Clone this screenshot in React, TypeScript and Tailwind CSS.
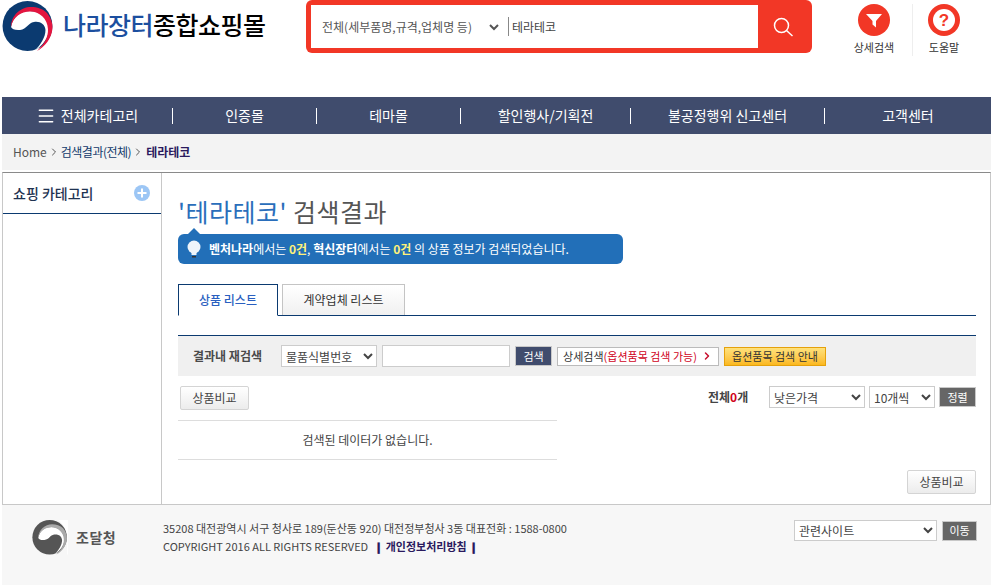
import { ChevronRight, Menu } from 'lucide-react';

const NAV = [
  { label: '인증몰', w: 'w-[144px]' },
  { label: '테마몰', w: 'w-[144px]' },
  { label: '할인행사/기획전', w: 'w-[170px]' },
  { label: '불공정행위 신고센터', w: 'w-[194px]' },
  { label: '고객센터', w: 'flex-1' },
];

function Emblem({ size, dark, accent }: { size: number; dark: string; accent: string }) {
  return (
    <svg width={size} height={size * 0.96} viewBox="2 1 52 50">
      <circle cx="27.5" cy="26" r="25" fill={dark} />
      <path
        d="M11 27C13 15 22 11 30 11C41 11 49 20 49 29C49 37 43 46 34 51L56 51L56 1L40 1C48 8 53 16 53 26L53 51L34 51C41 45 45.5 37 45.5 30C45 24 40 21 34 22C28 23 27 29 20 30C15 30.500 12 29 11 27Z"
        fill="#fff"
      />
      <path
        d="M11 27C11 15 21 7 31 7C37 7 43 9 47 13C51 18 52.800 23 52.500 28C52 38 45 47 37 51C44 45 48.500 37 48 29C47.500 19 40 11.500 30 11.500C21 11.500 13 17 11 27Z"
        fill={accent}
      />
      <path d="M53 26C53 16 48 8 40 3L56 3L56 51L37 51.500C46 49 53 38 53 26Z" fill="#fff" opacity="0" />
    </svg>
  );
}

function CompareButton() {
  return (
    <button className="h-[24px] w-[69px] border border-[#d4d4d4] rounded-[2px] bg-gradient-to-b from-white to-[#ececec] text-[12px] text-[#444]">
      상품비교
    </button>
  );
}

export default function App() {
  return (
    <div className="w-[992px] h-[585px] overflow-hidden bg-white pl-[2px] pr-[1px] text-[12px] text-[#444] font-['Noto_Sans_CJK_KR','Liberation_Sans',sans-serif]">
      {/* header */}
      <header className="h-[97px] flex items-start">
        <div className="w-[304px] flex items-center pt-[1px]">
          <Emblem size={52} dark="#0b3a70" accent="#e4153f" />
          <div className="ml-[9px] mt-[-4px] text-[25px] font-medium tracking-[-0.5px] leading-[36px] text-black whitespace-nowrap">
            <span className="text-[#1c4f9f]">나라장터</span>종합쇼핑몰
          </div>
        </div>
        <div className="w-[506px] h-[53px] flex bg-[#f23726] rounded-[6px] p-[5px] pr-0">
          <div className="flex-1 flex items-center bg-white pl-[7px]">
            <select className="w-[184px] h-[24px] text-[12px] text-[#555] bg-white outline-none">
              <option>전체(세부품명,규격,업체명 등)</option>
            </select>
            <span className="w-px h-[19px] bg-[#888] ml-[6px]" />
            <span className="ml-[3px] text-[12px] text-[#444]">테라테코</span>
          </div>
          <div className="w-[54px] flex items-center justify-center pr-[5px]">
            <svg width="22" height="22" viewBox="0 0 22 22" fill="none" stroke="#fff" strokeWidth="1.500">
              <circle cx="9.500" cy="9.500" r="7" />
              <path d="M14.500 14.500L20.500 20" />
            </svg>
          </div>
        </div>
        <div className="ml-[24px] w-[76px] flex flex-col items-center pt-[4px]">
          <div className="w-[32px] h-[32px] rounded-full bg-[#f23726] flex items-center justify-center">
            <svg width="18" height="18" viewBox="0 0 18 18" fill="#fff">
              <path d="M1 3H17L11 10V16.500L7.500 13.500V10Z" />
            </svg>
          </div>
          <span className="mt-[2px] text-[11px] leading-[18px] text-[#333]">상세검색</span>
        </div>
        <div className="w-px h-[52px] mt-[4px] bg-[#eee]" />
        <div className="w-[62px] flex flex-col items-center pt-[4px]">
          <div className="w-[32px] h-[32px] rounded-full bg-[#f23726] flex items-center justify-center">
            <span className="w-[22px] h-[22px] rounded-full bg-white flex items-center justify-center text-[17px] font-bold leading-none text-[#f23726] font-['Liberation_Sans',sans-serif]">
              ?
            </span>
          </div>
          <span className="mt-[2px] text-[11px] leading-[18px] text-[#333]">도움말</span>
        </div>
      </header>

      {/* nav */}
      <nav className="h-[37px] flex items-center bg-[#404c6d] text-[14px] text-white">
        <div className="w-[170px] flex items-center justify-center gap-[5px]">
          <Menu size={20} strokeWidth={1.75} />
          <span>전체카테고리</span>
        </div>
        {NAV.map((n) => (
          <div key={n.label} className={`${n.w} h-[16px] flex items-center justify-center border-l border-white`}>
            {n.label}
          </div>
        ))}
      </nav>

      {/* breadcrumb */}
      <div className="h-[36px] flex items-center bg-[#f3f3f3] pl-[11px] text-[12px] text-[#555]">
        <span>Home</span>
        <ChevronRight size={12} className="mx-[1px]" />
        <span className="text-[#123a6b] tracking-[-0.5px]">검색결과(전체)</span>
        <ChevronRight size={12} className="mx-[1px]" />
        <span className="ml-[1px] font-bold text-[#2a1a5e]">테라테코</span>
      </div>

      {/* main */}
      <main className="h-[333px] mt-[2px] flex border border-[#c8c8c8] border-t-[#8a8a8a]">
        <aside className="w-[159px] shrink-0 border-r border-[#c8c8c8]">
          <div className="h-[41px] flex items-center justify-between pl-[10px] pr-[11px] border-b border-[#0b3a70]">
            <span className="text-[14px] font-medium text-[#1f3352]">쇼핑 카테고리</span>
            <svg width="16" height="16" viewBox="0 0 16 16">
              <circle cx="8" cy="8" r="8" fill="#9cc6f5" />
              <path d="M8 3.500V12.500M3.500 8H12.500" stroke="#fff" strokeWidth="2" />
            </svg>
          </div>
        </aside>

        <section className="flex-1 pl-[16px] pr-[14px]">
          <h1 className="mt-[20px] h-[36px] text-[25px] leading-[36px] font-normal text-[#555] tracking-[0.5px] whitespace-nowrap">
            <span className="text-[#2a6ebb]">'테라테코'</span> 검색결과
          </h1>

          <div className="relative mt-[5px] w-[445px] h-[30px] flex items-center bg-[#226fb8] rounded-[6px] pl-[8px] text-[12px] text-white whitespace-nowrap">
            <span className="absolute left-[10px] top-[-6px] w-0 h-0 border-x-[6px] border-x-transparent border-b-[6px] border-b-[#226fb8]" />
            <svg width="16" height="20" viewBox="0 0 16 20" className="mr-[7px] shrink-0">
              <circle cx="8" cy="8" r="6.500" fill="#eef4fa" />
              <path d="M5.500 13H10.500V16H5.500Z" fill="#eef4fa" />
              <path d="M6 17H10V18.500H6Z" fill="#333" />
            </svg>
            <b>벤처나라</b>
            <span>에서는&nbsp;</span>
            <b className="text-[#fff27a]">0건</b>
            <span>,&nbsp;</span>
            <b>혁신장터</b>
            <span>에서는&nbsp;</span>
            <b className="text-[#fff27a]">0건</b>
            <span>&nbsp;의 상품 정보가 검색되었습니다.</span>
          </div>

          {/* tabs */}
          <div className="mt-[20px] h-[32px] flex items-end gap-[4px] border-b border-[#0b3a70]">
            <div className="w-[100px] h-[32px] mb-[-1px] flex items-center justify-center bg-white border border-[#0b3a70] border-b-white text-[12px] font-medium text-[#2a5fc0]">
              상품 리스트
            </div>
            <div className="w-[123px] h-[31px] flex items-center justify-center border border-[#c4c4c4] border-b-0 bg-gradient-to-b from-white to-[#f0f0f0] text-[12px] text-[#333]">
              계약업체 리스트
            </div>
          </div>

          {/* refine search */}
          <div className="mt-[19px] h-[41px] flex items-center bg-[#f0f0f0] border-t border-[#0b3a70] pl-[15px]">
            <span className="w-[88px] text-[12px] font-bold text-[#4a4a4a] whitespace-nowrap">결과내 재검색</span>
            <select className="w-[96px] h-[22px] text-[12px] bg-white border border-[#ccc] text-[#444]">
              <option>물품식별번호</option>
            </select>
            <input className="ml-[5px] w-[128px] h-[22px] bg-white border border-[#ccc]" />
            <button className="ml-[5px] w-[37px] h-[20px] bg-[#404c6d] border border-[#c8c8c8] text-[11px] text-white">
              검색
            </button>
            <button className="ml-[5px] w-[162px] h-[19px] flex items-center justify-center bg-white border border-[#bbb] text-[11px] text-[#333] whitespace-nowrap">
              상세검색<span className="text-[#d0021b]">(옵션품목 검색 가능)</span>
              <ChevronRight size={12} strokeWidth={3} className="ml-[4px] text-[#c8102e]" />
            </button>
            <button className="ml-[5px] w-[102px] h-[19px] bg-gradient-to-b from-[#ffe27a] to-[#fbb81a] border border-[#e5a10c] text-[11px] text-[#333] whitespace-nowrap">
              옵션품목 검색 안내
            </button>
          </div>

          {/* sort row */}
          <div className="mt-[10px] flex items-start justify-between pl-[2px]">
            <CompareButton />
            <div className="flex items-center">
              <span className="w-[61px] text-[12px] font-bold text-[#444] whitespace-nowrap">
                전체<span className="text-[#d0021b]">0</span>개
              </span>
              <select className="w-[96px] h-[22px] text-[12px] bg-white border border-[#ccc] text-[#444]">
                <option>낮은가격</option>
              </select>
              <select className="ml-[4px] w-[66px] h-[22px] text-[12px] bg-white border border-[#ccc] text-[#444]">
                <option>10개씩</option>
              </select>
              <button className="ml-[4px] w-[37px] h-[20px] bg-[#666] border border-[#c8c8c8] text-[11px] text-white">
                정렬
              </button>
            </div>
          </div>

          {/* empty table */}
          <div className="mt-[10px] w-[379px] h-[40px] flex items-center justify-center border-y border-[#ddd] text-[12px] text-[#444]">
            검색된 데이터가 없습니다.
          </div>

          <div className="mt-[10px] flex justify-end">
            <CompareButton />
          </div>
        </section>
      </main>

      {/* footer */}
      <footer className="h-[80px] flex items-start bg-[#f7f7f7]">
        <div className="w-[161px] pl-[30px] pt-[15px] flex items-center">
          <Emblem size={36} dark="#555" accent="#aaa" />
          <span className="ml-[8px] text-[14px] font-bold text-[#555] tracking-[0.5px]">조달청</span>
        </div>
        <div className="flex-1 pt-[14px] text-[11px] leading-[18px] text-[#444] whitespace-nowrap">
          <p>35208 대전광역시 서구 청사로 189(둔산동 920) 대전정부청사 3동 대표전화 : 1588-0800</p>
          <p>
            COPYRIGHT 2016 ALL RIGHTS RESERVED
            <b className="mx-[6px] text-[#2a1a5e]">❙ 개인정보처리방침 ❙</b>
          </p>
        </div>
        <div className="mt-[15px] mr-[14px] flex items-center">
          <select className="w-[143px] h-[21px] text-[12px] bg-white border border-[#ccc] text-[#444]">
            <option>관련사이트</option>
          </select>
          <button className="ml-[5px] w-[35px] h-[20px] bg-[#666] border border-[#c8c8c8] text-[11px] text-white">
            이동
          </button>
        </div>
      </footer>
    </div>
  );
}
